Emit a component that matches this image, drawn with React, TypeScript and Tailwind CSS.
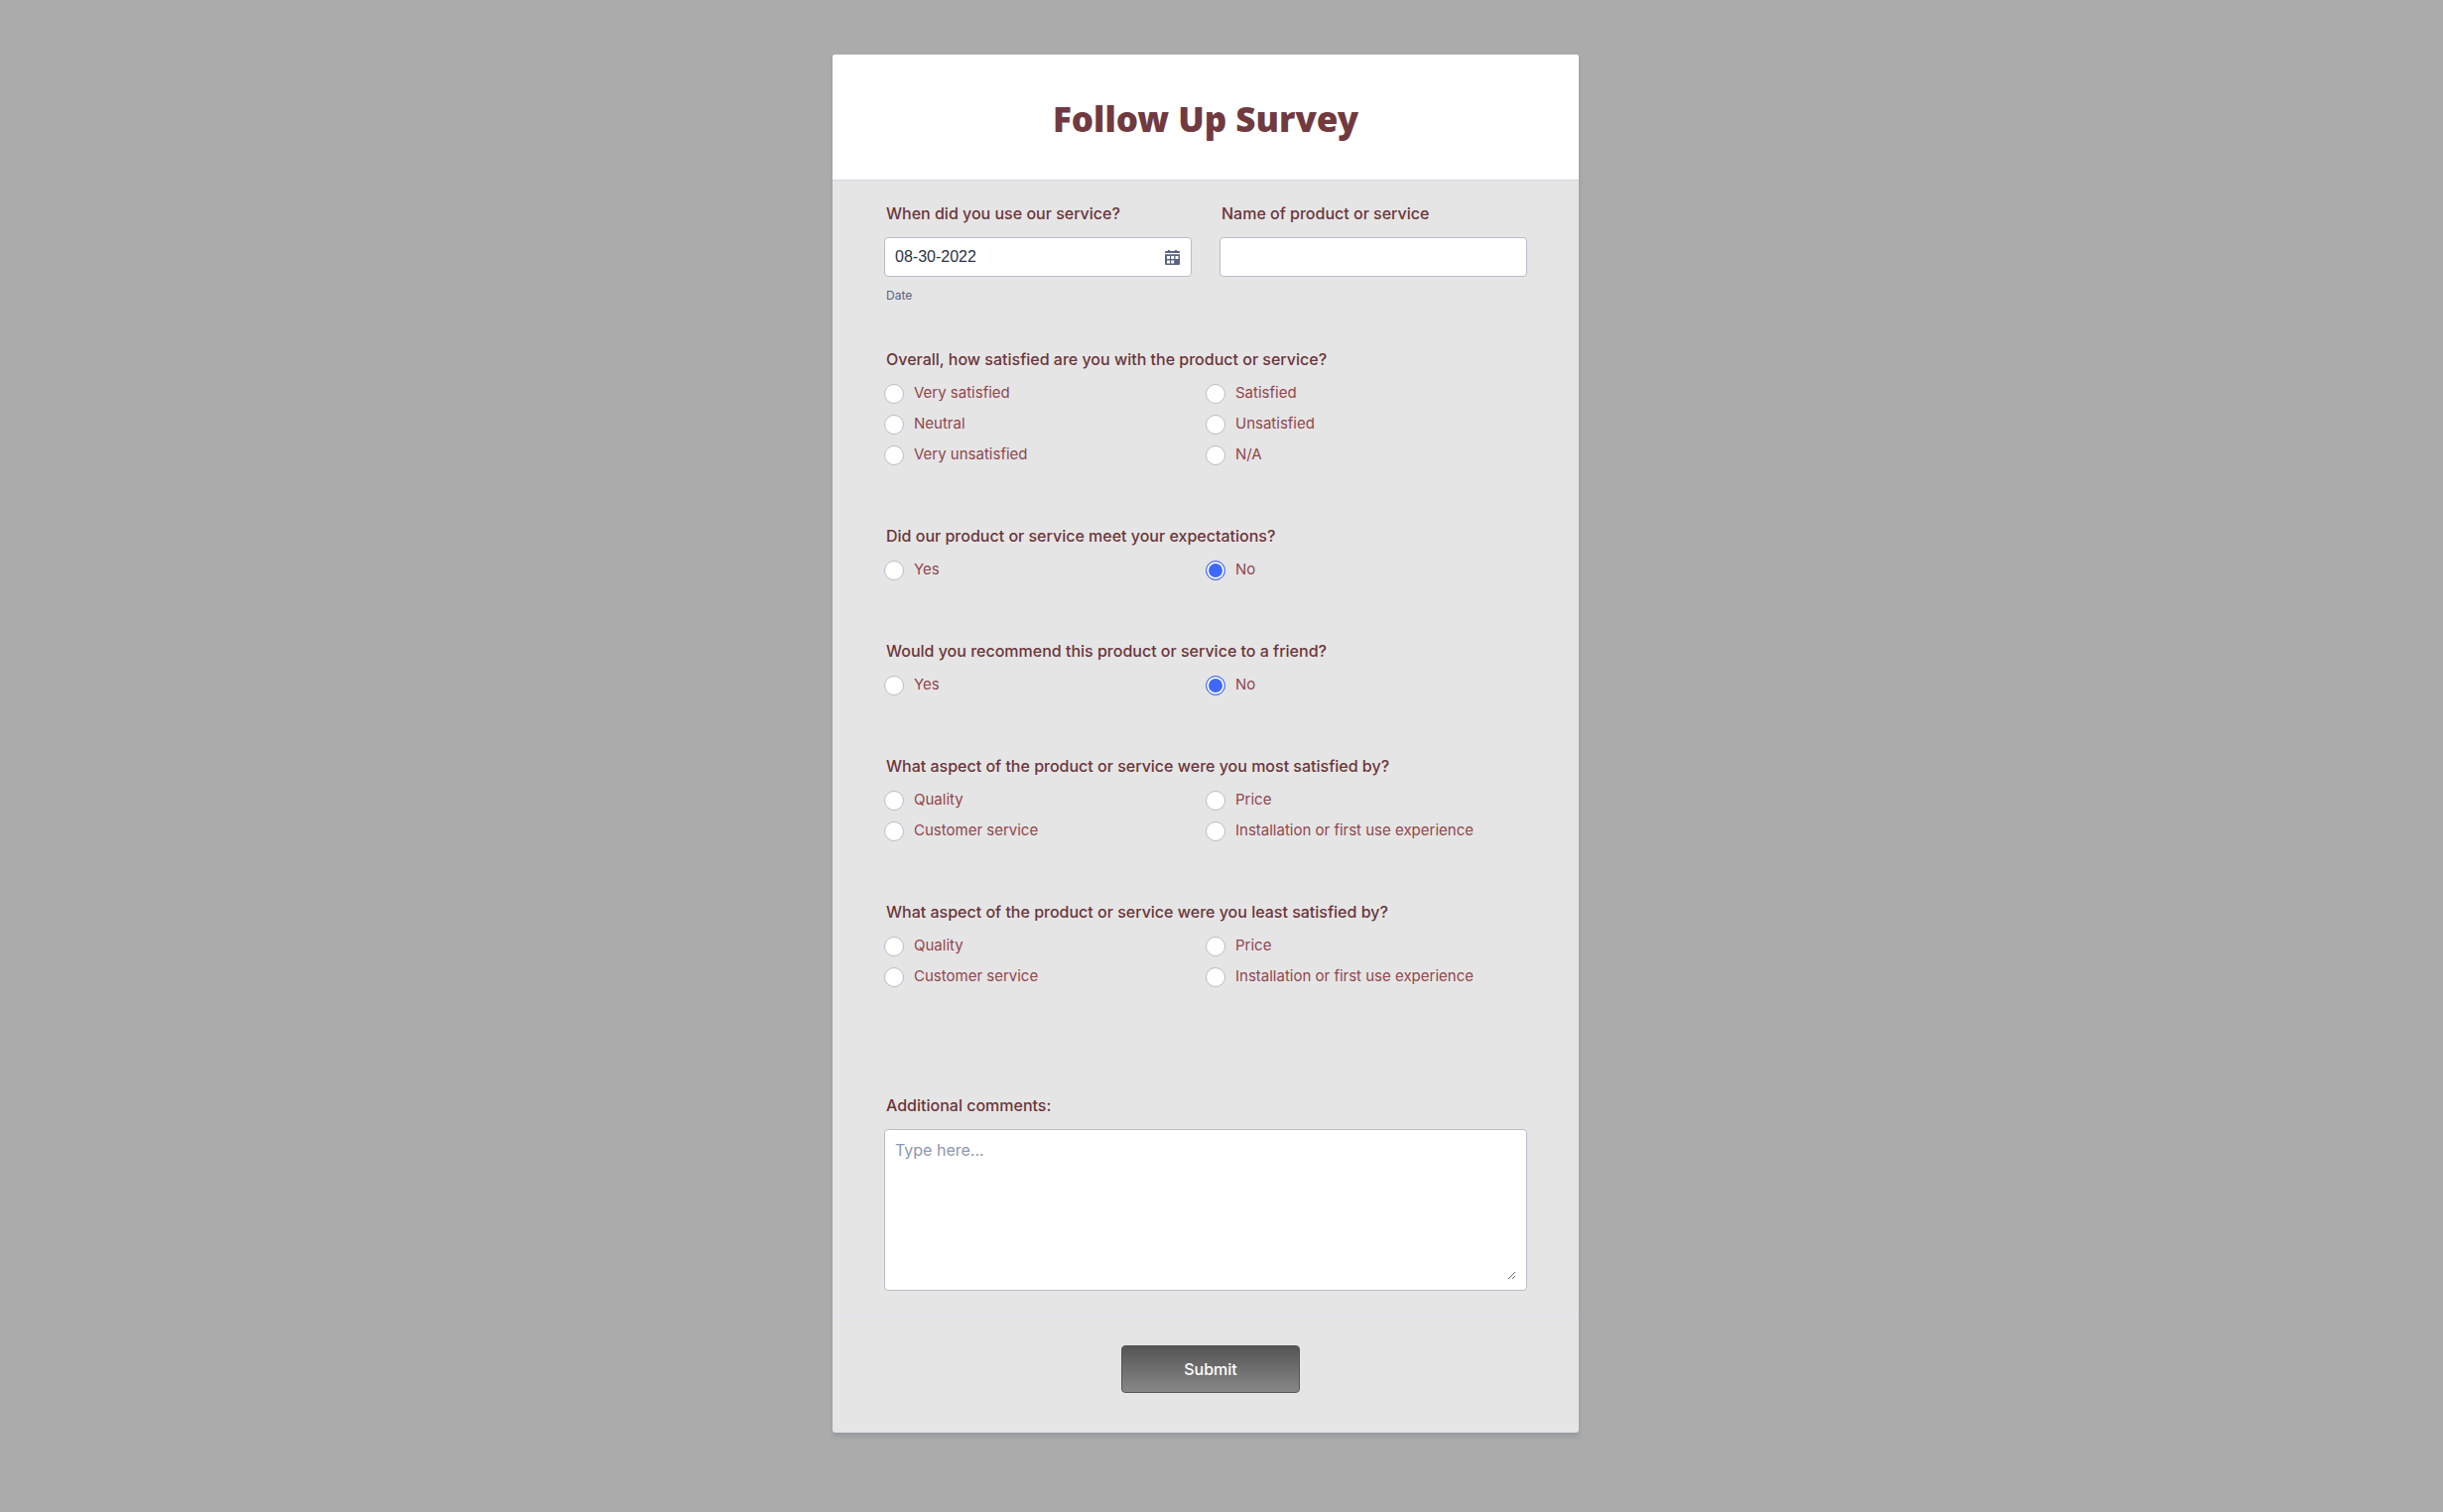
import React from "react";

type Question = {
  id: string;
  text: string;
  options: string[];
  selected?: string;
};

const questions: Question[] = [
  {
    id: "overall",
    text: "Overall, how satisfied are you with the product or service?",
    options: ["Very satisfied", "Satisfied", "Neutral", "Unsatisfied", "Very unsatisfied", "N/A"],
  },
  {
    id: "expectations",
    text: "Did our product or service meet your expectations?",
    options: ["Yes", "No"],
    selected: "No",
  },
  {
    id: "recommend",
    text: "Would you recommend this product or service to a friend?",
    options: ["Yes", "No"],
    selected: "No",
  },
  {
    id: "most",
    text: "What aspect of the product or service were you most satisfied by?",
    options: ["Quality", "Price", "Customer service", "Installation or first use experience"],
  },
  {
    id: "least",
    text: "What aspect of the product or service were you least satisfied by?",
    options: ["Quality", "Price", "Customer service", "Installation or first use experience"],
  },
];

const labelClass = "block px-0.5 text-base leading-5 font-medium text-[#6b363b]";
const fieldClass =
  "h-10 w-full rounded-sm border border-[#b8bdc9] bg-white px-2.5 font-['Liberation_Sans',sans-serif] text-base text-[#2c3345] outline-none";

function CalendarIcon() {
  return (
    <svg viewBox="0 0 15 15" className="block size-[15px]" aria-hidden="true">
      <path
        fill="#5a6480"
        fillRule="evenodd"
        d="M3 0h2v1h5V0h2v1h2a1 1 0 0 1 1 1v1H0V2a1 1 0 0 1 1-1h2zM0 4.3h15V14a1 1 0 0 1-1 1H1a1 1 0 0 1-1-1zM2 6v3h3V6zm4.2 0v3h3V6zm4.3 0v3h3V6zM2 10.4v3h3v-3zm4.2 0v3h3v-3z"
      />
    </svg>
  );
}

function RadioQuestion({ question }: { question: Question }) {
  return (
    <fieldset>
      <legend className={labelClass}>{question.text}</legend>
      <div className="grid grid-cols-2 gap-y-[11px] pt-[15px]">
        {question.options.map((option) => (
          <label key={option} className="flex items-start gap-2.5 text-[15px] leading-[18px] text-[#91474e]">
            <input
              type="radio"
              name={question.id}
              value={option}
              defaultChecked={option === question.selected}
              className="size-5 shrink-0 appearance-none rounded-full border border-[#b8bdc9] bg-white checked:border-[#3f68fa] checked:bg-[#3f68fa] checked:shadow-[inset_0_0_0_2px_white]"
            />
            {option}
          </label>
        ))}
      </div>
    </fieldset>
  );
}

export default function App() {
  return (
    <div className="min-h-screen bg-[#ababab] py-[55px] pr-8 font-['Inter',sans-serif]">
      <form
        onSubmit={(event) => event.preventDefault()}
        className="mx-auto w-full max-w-[752px] overflow-hidden rounded-[3px] bg-[#e5e5e5] shadow-[0_4px_4px_rgba(87,100,126,0.21)]"
      >
        <header className="border-b border-[#d5d7da] bg-white px-13 pt-[45px] pb-[41px] text-center">
          <h1 className="font-['Noto_Sans',sans-serif] text-[35px] leading-10 font-black text-[#713a40]">
            Follow Up Survey
          </h1>
        </header>

        <div className="px-13 pt-[23px] pb-6">
          <div className="grid grid-cols-2 gap-7">
            <div>
              <label htmlFor="date" className={labelClass}>
                When did you use our service?
              </label>
              <div className="relative mt-3.5">
                <input id="date" type="text" defaultValue="08-30-2022" className={fieldClass} />
                <button type="button" aria-label="Choose date" className="absolute top-[13px] right-3">
                  <CalendarIcon />
                </button>
              </div>
              <p className="mt-[11px] px-0.5 text-xs leading-4 text-[#57647e]">Date</p>
            </div>
            <div>
              <label htmlFor="product" className={labelClass}>
                Name of product or service
              </label>
              <input id="product" type="text" className={`${fieldClass} mt-3.5`} />
            </div>
          </div>

          <div className="mt-[46px] flex flex-col gap-[61px]">
            {questions.map((question) => (
              <RadioQuestion key={question.id} question={question} />
            ))}
          </div>

          <div className="mt-[109px]">
            <label htmlFor="comments" className={labelClass}>
              Additional comments:
            </label>
            <div className="mt-3.5 rounded-sm border border-[#b8bdc9] bg-white p-2.5">
              <textarea
                id="comments"
                placeholder="Type here..."
                className="block h-[141px] w-full resize bg-white text-base leading-5 text-[#2c3345] outline-none placeholder:text-[#8d97b0]"
              />
            </div>
          </div>
        </div>

        <div className="border-t-2 border-[#e3e4ec] pt-[29px] pb-10 pl-2.5 text-center">
          <button
            type="submit"
            className="h-12 w-[180px] rounded-sm border border-[#555555] bg-linear-to-b from-[#555555] to-[#888888] text-base font-medium text-white"
          >
            Submit
          </button>
        </div>
      </form>
    </div>
  );
}
